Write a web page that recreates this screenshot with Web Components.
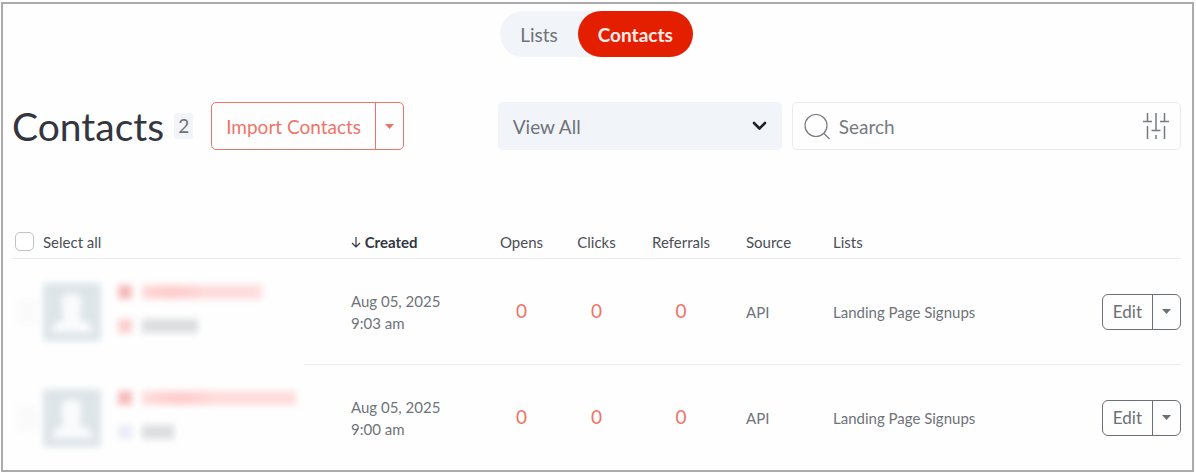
<!DOCTYPE html>
<html lang="en">
<head>
<meta charset="utf-8">
<meta name="viewport" content="width=device-width, initial-scale=1">
<title>Contacts</title>
<style>
    body {
        margin: 0;
        background-color: #fefefe;
        color: #6f7379;
        font-family: Lato, "Liberation Sans", sans-serif;
        font-size: 15px;
        --red: #e41f00;
        --coral: #ee7468;
        --dark: #33363f;
        --panel: #f1f4f9;
        --line: #e9ecee;
    }
</style>
</head>
<body>
<contacts-page></contacts-page>

<script>
class ViewTabs extends HTMLElement {
    constructor() {
        super();
        this.attachShadow({ mode: "open" });
        this.shadowRoot.innerHTML = `
        <style>
            :host {
                display: flex;
                justify-content: center;
            }

            nav {
                display: flex;
                background-color: var(--panel);
                border-radius: 23px;
            }

            button {
                height: 46px;
                padding: 0 20px;
                border: 0;
                border-radius: 23px;
                background: none;
                color: inherit;
                font: inherit;
                font-size: 19px;
                cursor: pointer;
            }

            button[aria-current] {
                background-color: var(--red);
                color: #ffece9;
                font-weight: bold;
            }
        </style>
        <nav>
            <button type="button">Lists</button>
            <button type="button" aria-current="page">Contacts</button>
        </nav>
        `;
    }
}

class SplitButton extends HTMLElement {
    constructor() {
        super();
        this.attachShadow({ mode: "open" });
        this.shadowRoot.innerHTML = `
        <style>
            :host {
                display: inline-flex;
                box-sizing: border-box;
                height: 36px;
                border: 1px solid currentColor;
                border-radius: 6px;
                color: #6b6f76;
                font-size: 17px;
                --pad: 10px;
            }

            :host([large]) {
                height: 48px;
                border-radius: 5px;
                color: var(--coral);
                font-size: 19px;
                --pad: 14px;
            }

            button {
                display: flex;
                align-items: center;
                justify-content: center;
                padding: 0 var(--pad);
                border: 0;
                background: none;
                color: inherit;
                font: inherit;
                cursor: pointer;
            }

            .toggle {
                width: 28px;
                padding: 0;
                border-left: 1px solid currentColor;
            }
        </style>
        <button type="button"><slot></slot></button>
        <button type="button" class="toggle" aria-label="More actions">
            <svg width="9" height="5" viewBox="0 0 9 5"><path d="M0 0h9L4.500 5z" fill="currentColor"/></svg>
        </button>
        `;
    }
}

class FilterSelect extends HTMLElement {
    constructor() {
        super();
        this.attachShadow({ mode: "open" });
        this.shadowRoot.innerHTML = `
        <style>
            :host {
                display: grid;
                align-items: center;
            }

            select, svg {
                grid-area: 1 / 1;
            }

            select {
                appearance: none;
                width: 100%;
                height: 48px;
                padding: 0 15px;
                border: 0;
                border-radius: 5px;
                background-color: var(--panel);
                color: inherit;
                font: inherit;
                font-size: 19px;
            }

            svg {
                justify-self: end;
                margin-right: 15px;
                pointer-events: none;
            }
        </style>
        <select aria-label="Filter contacts">
            <option>View All</option>
        </select>
        <svg width="15" height="10" viewBox="0 0 15 10"><path d="M2 2l5.500 5.500L13 2" fill="none" stroke="#1f2228" stroke-width="2.600" stroke-linecap="round" stroke-linejoin="round"/></svg>
        `;
    }
}

class SearchBox extends HTMLElement {
    constructor() {
        super();
        this.attachShadow({ mode: "open" });
        this.shadowRoot.innerHTML = `
        <style>
            :host {
                display: flex;
                align-items: center;
                box-sizing: border-box;
                height: 48px;
                padding: 0 11px;
                gap: 9px;
                border: 1px solid var(--line);
                border-radius: 5px;
            }

            label {
                display: flex;
            }

            input {
                flex: 1;
                min-width: 0;
                padding: 0;
                border: 0;
                outline: 0;
                background: none;
                color: inherit;
                font: inherit;
                font-size: 19px;
            }

            input::placeholder {
                color: #777b80;
                opacity: 1;
            }

            button {
                display: flex;
                padding: 0;
                border: 0;
                background: none;
                cursor: pointer;
            }

            svg {
                fill: none;
                stroke: #777b80;
            }
        </style>
        <label for="search" aria-label="Search">
            <svg width="26" height="27" viewBox="0 0 26 27" stroke-width="1.200"><circle cx="12" cy="12.500" r="11"/><path d="M20 20.500l5.500 5.500"/></svg>
        </label>
        <input id="search" type="text" placeholder="Search">
        <button type="button" aria-label="Filters">
            <svg width="26" height="26" viewBox="0 0 26 26" stroke-width="1.500"><path d="M4.500 0v8.500M0 8.500h9M4.500 13v13M13 0v17.500M8.500 17.500h9M13 22v4M21.500 0v8.500M17 8.500h9M21.500 13v13"/></svg>
        </button>
        `;
    }
}

// Contact details stay blurred: only the avatar and the shape of the lines show
class HiddenContact extends HTMLElement {
    constructor() {
        super();
        this.attachShadow({ mode: "open" });
        const email = this.getAttribute("email-width");
        const name = this.getAttribute("name-width");
        this.shadowRoot.innerHTML = `
        <style>
            :host {
                display: flex;
                align-items: center;
                padding-left: 5px;
            }

            .check {
                width: 20px;
                height: 24px;
                margin-right: 6px;
                background-color: #fafafb;
                filter: blur(3px);
            }

            .avatar {
                filter: blur(3px);
            }

            .lines {
                display: grid;
                grid-template-columns: 14px auto;
                align-items: center;
                gap: 20px 10px;
                margin: 0 0 6px 17px;
                filter: blur(3px);
            }

            .lines span {
                height: 14px;
            }

            .mail {
                background-color: #f6bcbc;
            }

            .email {
                width: ${email}px;
                background: radial-gradient(ellipse 36px 20px at 25% 50%, #ffcaca, #ffdcdc);
            }

            .person {
                background-color: #fccfcf;
            }

            .name {
                width: ${name}px;
                background-color: #dcdee0;
            }

            :host([muted]) .person {
                background-color: #e9edf6;
            }
        </style>
        <div class="check"></div>
        <svg class="avatar" width="58" height="58" viewBox="0 0 58 58">
            <rect width="58" height="58" rx="3" fill="#dee5e9"/>
            <rect x="19" y="11" width="19" height="22" rx="6" fill="#fafbfd"/>
            <path d="M20 27h17v10q12 2 13 12H9q1-10 11-12z" fill="#fafbfd"/>
        </svg>
        <div class="lines">
            <span class="mail"></span><span class="email"></span>
            <span class="person"></span><span class="name"></span>
        </div>
        `;
    }
}

class ContactsTable extends HTMLElement {
    constructor() {
        super();
        this.attachShadow({ mode: "open" });
        this.contacts = [
            { time: "9:03 am", email: 120, name: 56, muted: "" },
            { time: "9:00 am", email: 154, name: 32, muted: "muted" }
        ];
        this.render();
    }

    getRow(contact) {
        return `
        <tr>
            <td class="contact"><hidden-contact email-width="${contact.email}" name-width="${contact.name}" ${contact.muted}></hidden-contact></td>
            <td class="date">Aug 05, 2025<br>${contact.time}</td>
            <td class="count"><a href="#opens">0</a></td>
            <td class="count"><a href="#clicks">0</a></td>
            <td class="count"><a href="#referrals">0</a></td>
            <td class="info">API</td>
            <td class="info">Landing Page Signups</td>
            <td class="actions"><split-button>Edit</split-button></td>
        </tr>
        `;
    }

    render() {
        this.shadowRoot.innerHTML = `
        <style>
            :host {
                display: block;
            }

            table {
                width: 100%;
                table-layout: fixed;
                border-collapse: separate;
                border-spacing: 0;
            }

            th, td {
                padding: 0;
                text-align: left;
                line-height: 22px;
            }

            th {
                height: 33px;
                border-bottom: 1px solid var(--line);
                color: #4b4e55;
                font-weight: normal;
            }

            td {
                height: 105px;
            }

            tr:not(:last-child) td {
                border-bottom: 1px solid var(--line);
            }

            tr:not(:last-child) td.contact {
                border-bottom-color: transparent;
                background: linear-gradient(var(--line), var(--line)) right bottom / 47px 1px no-repeat border-box;
            }

            .count {
                text-align: center;
            }

            .info {
                padding-left: 18px;
            }

            .actions {
                text-align: right;
            }

            split-button {
                vertical-align: middle;
            }

            .select-all {
                display: flex;
                align-items: center;
                gap: 9px;
            }

            input {
                appearance: none;
                width: 19px;
                height: 19px;
                margin: 0 0 0 3px;
                border: 1px solid #bfc2c6;
                border-radius: 5px;
                background-color: #fff;
            }

            .sorted {
                color: var(--dark);
                font-weight: bold;
            }

            a {
                color: var(--coral);
                font-size: 19px;
                text-decoration: none;
            }
        </style>
        <table>
            <colgroup>
                <col style="width: 339px">
                <col style="width: 133px">
                <col style="width: 75px">
                <col style="width: 75px">
                <col style="width: 94px">
                <col style="width: 87px">
                <col>
                <col style="width: 90px">
            </colgroup>
            <thead>
                <tr>
                    <th><label class="select-all"><input type="checkbox">Select all</label></th>
                    <th class="sorted" aria-sort="descending"><svg width="10" height="11" viewBox="0 0 10 11" fill="none" stroke="currentColor" stroke-width="1.200"><path d="M5 0v10M1 6l4 4 4-4"/></svg> Created</th>
                    <th class="count">Opens</th>
                    <th class="count">Clicks</th>
                    <th class="count">Referrals</th>
                    <th class="info">Source</th>
                    <th class="info">Lists</th>
                    <th></th>
                </tr>
            </thead>
            <tbody>${this.contacts.map(contact => this.getRow(contact)).join("")}</tbody>
        </table>
        `;
    }
}

class ContactsPage extends HTMLElement {
    constructor() {
        super();
        this.attachShadow({ mode: "open" });
        this.render();
    }

    render() {
        this.shadowRoot.innerHTML = `
        <style>
            :host {
                display: block;
                margin: 2px 2px 1px 1px;
                padding: 7px 11px 0 9px;
                border: 2px solid #ababae;
            }

            header {
                display: grid;
                grid-template-columns: 1fr 284px 33.3%;
                align-items: center;
                gap: 10px;
                margin: 45px 0 75px;
            }

            .heading {
                display: flex;
                align-items: center;
            }

            h1 {
                margin: 0;
                color: var(--dark);
                font-size: 39px;
                font-weight: normal;
                line-height: 48px;
            }

            .total {
                margin: 0 18px 0 10px;
                padding: 0 4px;
                border-radius: 3px;
                background-color: var(--panel);
                font-size: 19px;
                line-height: 26px;
            }
        </style>
        <view-tabs></view-tabs>
        <header>
            <div class="heading">
                <h1>Contacts</h1>
                <span class="total">2</span>
                <split-button large>Import Contacts</split-button>
            </div>
            <filter-select></filter-select>
            <search-box></search-box>
        </header>
        <contacts-table></contacts-table>
        `;
    }
}

customElements.define("view-tabs", ViewTabs);
customElements.define("split-button", SplitButton);
customElements.define("filter-select", FilterSelect);
customElements.define("search-box", SearchBox);
customElements.define("hidden-contact", HiddenContact);
customElements.define("contacts-table", ContactsTable);
customElements.define("contacts-page", ContactsPage);
</script>
</body>
</html>
